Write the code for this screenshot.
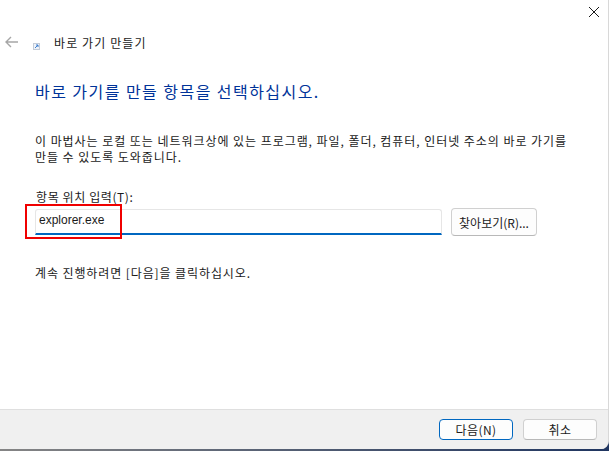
<div class="desktop">
  <div class="dialog">
    <div class="titlebar">
      <svg class="close" width="10" height="10" viewBox="0 0 10 10">
        <path d="M0 0 L10 10 M10 0 L0 10" stroke="#1a1a1a" stroke-width="1" fill="none" />
      </svg>
    </div>
    <div class="nav">
      <svg class="back" width="13" height="12" viewBox="0 0 13 12">
        <path d="M6 1 L1 6 L6 11 M1 6 H13" stroke="#a6a6a6" stroke-width="1.4" fill="none" />
      </svg>
      <svg class="shortcut" width="7" height="7" viewBox="0 0 7 7">
        <rect x="0.5" y="0.5" width="6" height="6" fill="#eef2f8" stroke="#c4ccd8" />
        <path d="M2 5 L5 2 M3 2 H5 V4" stroke="#3d7fd0" fill="none" />
      </svg>
      <span class="nav-title">바로 가기 만들기</span>
    </div>
    <div class="content">
      <h1>바로 가기를 만들 항목을 선택하십시오.</h1>
      <p class="intro">이 마법사는 로컬 또는 네트워크상에 있는 프로그램, 파일, 폴더, 컴퓨터, 인터넷 주소의 바로 가기를<br />만들 수 있도록 도와줍니다.</p>
      <div class="label">항목 위치 입력(T):</div>
      <div class="field-row">
        <div class="input-wrap">
          <input value="explorer.exe" readonly />
          <div class="annotation"></div>
        </div>
        <button class="browse">찾아보기(R)...</button>
      </div>
      <p class="hint">계속 진행하려면 [다음]을 클릭하십시오.</p>
    </div>
    <div class="footer">
      <button class="primary">다음(N)</button>
      <button>취소</button>
    </div>
  </div>
</div>

<style>
  :global(body) {
    margin: 0;
    background: #fff;
  }

  .desktop {
    width: 609px;
    height: 451px;
    overflow: hidden;
    background: linear-gradient(90deg, #858585, #1f3560) bottom / 100% 10px no-repeat;
    font-family: "Noto Sans CJK KR", "Liberation Sans", sans-serif;
    font-size: 12px;
    color: #1a1a1a;
  }

  .dialog {
    box-sizing: border-box;
    width: 609px;
    height: 449px;
    background: #fff;
    border-right: 1px solid #d8d8d8;
    border-bottom-right-radius: 8px;
    display: flex;
    flex-direction: column;
    overflow: hidden;
  }

  .titlebar {
    height: 30px;
    display: flex;
    justify-content: flex-end;
    align-items: flex-start;
    padding: 7px 9px 0 0;
    box-sizing: border-box;
    flex: none;
  }

  .nav {
    height: 24px;
    display: flex;
    align-items: center;
    padding-left: 5px;
    flex: none;
  }

  .back {
    margin-bottom: 1px;
  }

  .shortcut {
    margin: 9px 0 0 15px;
  }

  .nav-title {
    margin-left: 14px;
    letter-spacing: 1.1px;
  }

  .content {
    flex: 1;
    padding: 26px 0 0 35px;
  }

  h1 {
    margin: 0;
    font-size: 16px;
    font-weight: 400;
    line-height: 22px;
    letter-spacing: 1.45px;
    color: #003399;
  }

  .intro {
    margin: 31px 0 0;
    line-height: 16px;
    letter-spacing: 0.95px;
    white-space: nowrap;
  }

  .label {
    margin: 24px 0 0 1px;
    line-height: 16px;
    letter-spacing: 0.6px;
  }

  .field-row {
    display: flex;
    gap: 9px;
    align-items: flex-start;
    margin-top: 4px;
  }

  .input-wrap {
    position: relative;
    width: 407px;
  }

  input {
    box-sizing: border-box;
    width: 100%;
    height: 26px;
    border: 1px solid #e6e6e6;
    border-bottom: 2px solid #0067c0;
    border-radius: 3px 3px 0 0;
    padding: 0 3px 4px;
    font: 12px "Liberation Sans", sans-serif;
    color: #1a1a1a;
    outline: none;
    display: block;
  }

  .annotation {
    position: absolute;
    left: -10px;
    top: -5px;
    width: 93px;
    height: 31px;
    border: 2px solid #f00000;
    pointer-events: none;
  }

  button {
    box-sizing: border-box;
    background: #fdfdfd;
    border: 1px solid #d0d0d0;
    border-bottom-color: #b8b8b8;
    border-radius: 4px;
    font: inherit;
    color: #1a1a1a;
    padding: 0;
  }

  .browse {
    width: 86px;
    height: 28px;
    margin-top: -1px;
  }

  .hint {
    margin: 29px 0 0;
    line-height: 16px;
    letter-spacing: 0.9px;
  }

  .footer {
    box-sizing: border-box;
    height: 40px;
    background: #f0f0f0;
    border-top: 1px solid #dfdfdf;
    display: flex;
    justify-content: flex-end;
    align-items: flex-start;
    gap: 10px;
    padding: 9px 11px 0 0;
    flex: none;
  }

  .footer button {
    width: 74px;
    height: 21px;
    line-height: 17px;
    letter-spacing: 0.4px;
  }

  .footer .primary {
    border: 1.5px solid #0067c0;
  }
</style>
